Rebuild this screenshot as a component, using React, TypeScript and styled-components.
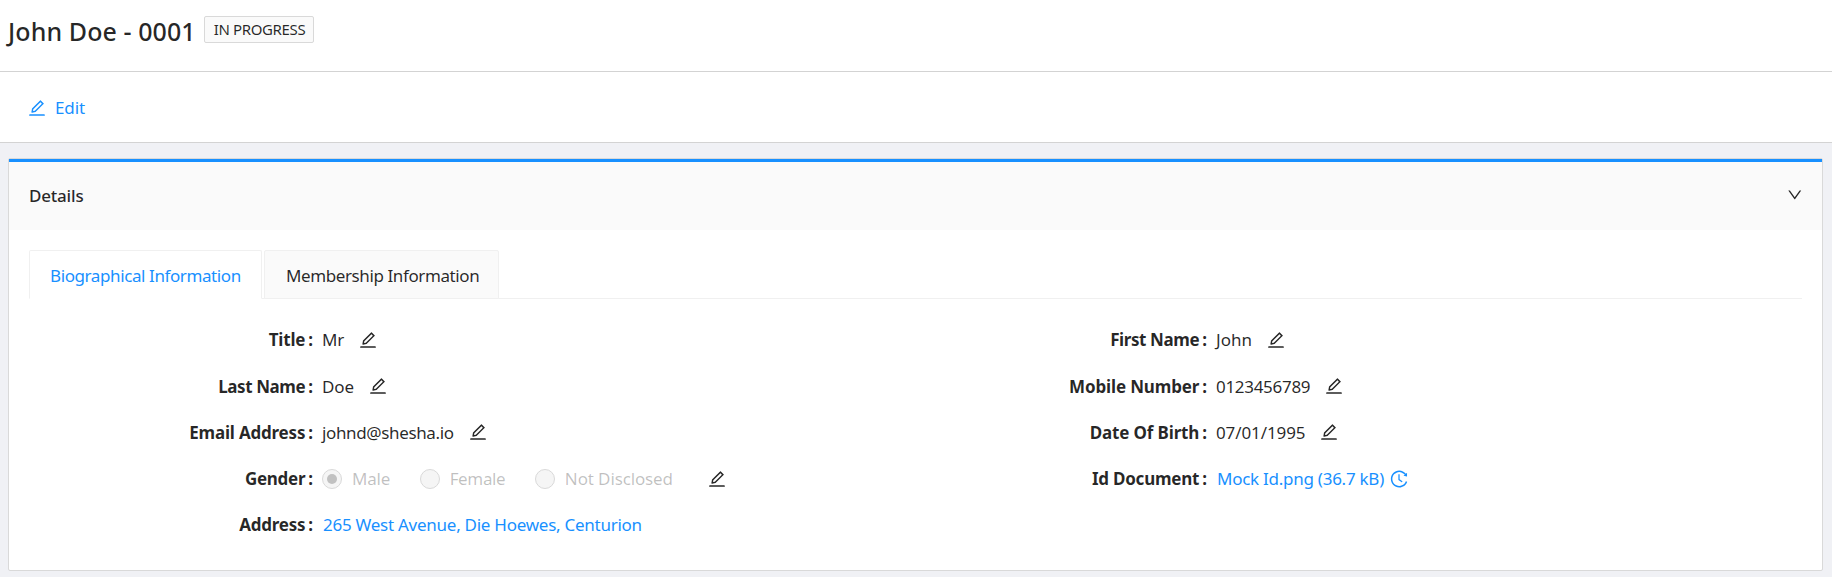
import React from 'react';
import styled, { createGlobalStyle } from 'styled-components';
import { AiOutlineEdit, AiOutlineDown, AiOutlineHistory } from 'react-icons/ai';

const GlobalStyle = createGlobalStyle`
  *, *::before, *::after { box-sizing: border-box; }
  body {
    margin: 0;
    background: #f0f1f5;
    color: rgba(0, 0, 0, 0.85);
    font-family: 'Noto Sans', 'Open Sans', sans-serif;
    font-size: 17px;
    line-height: 26px;
  }
  svg { display: block; }
`;

const Page = styled.div`
  display: flex;
  flex-direction: column;
  height: 577px;
  overflow: hidden;
  background: #f0f1f5;
`;

const TitleBar = styled.header`
  display: flex;
  align-items: flex-start;
  gap: 8px;
  height: 72px;
  padding: 16px 8px 0;
  background: #fff;
  border-bottom: 1px solid #d3d3d3;
`;

const PageTitle = styled.h1`
  margin: 0;
  font-size: 25px;
  line-height: 30px;
  font-weight: 500;
  letter-spacing: 0.08px;
`;

const StatusTag = styled.span`
  height: 27px;
  padding: 0 8px 0 9px;
  background: #fafafa;
  border: 1px solid #d9d9d9;
  border-radius: 2px;
  font-size: 15px;
  line-height: 25px;
  letter-spacing: -0.36px;
`;

const Toolbar = styled.div`
  display: flex;
  align-items: center;
  height: 71px;
  padding: 0 27px;
  background: #fff;
  border-bottom: 1px solid #d3d3d3;
`;

const EditButton = styled.button`
  display: flex;
  align-items: center;
  gap: 8px;
  padding: 1px 0 0;
  border: 0;
  background: none;
  color: #1890ff;
  font: inherit;
  letter-spacing: -0.1px;
`;

const Panel = styled.section`
  display: flex;
  flex-direction: column;
  width: 1815px;
  height: 413px;
  margin: 15px 0 0 8px;
  background: #fff;
  border: 1px solid #d9d9d9;
  border-radius: 2px;
`;

const PanelHeader = styled.div`
  display: flex;
  align-items: center;
  justify-content: space-between;
  height: 71px;
  padding: 0 19px 2px 20px;
  background: #fafafa;
  border-top: 3px solid #1890ff;
`;

const PanelTitle = styled.span`
  padding-top: 1px;
  font-weight: 500;
  letter-spacing: -0.2px;
`;

const PanelBody = styled.div`
  padding: 20px 20px 0;
`;

const TabList = styled.div`
  display: flex;
  gap: 2px;
  height: 49px;
  border-bottom: 1px solid #f0f0f0;
`;

const Tab = styled.div<{ $active?: boolean }>`
  width: ${(p) => (p.$active ? 233 : 235)}px;
  height: 49px;
  padding: 0 0 0 ${(p) => (p.$active ? 20 : 21)}px;
  line-height: 49px;
  white-space: nowrap;
  letter-spacing: -0.4px;
  color: ${(p) => (p.$active ? '#1890ff' : 'rgba(0, 0, 0, 0.85)')};
  background: ${(p) => (p.$active ? '#fff' : '#fafafa')};
  border: 1px solid #f0f0f0;
  border-bottom-color: ${(p) => (p.$active ? '#fff' : '#f0f0f0')};
  border-radius: 2px 2px 0 0;
`;

const Form = styled.div`
  display: grid;
  grid-template-columns: 894px 1fr;
  padding-top: 18px;
`;

const Column = styled.div`
  display: flex;
  flex-direction: column;
`;

const FieldRow = styled.div`
  display: grid;
  grid-template-columns: 284px 1fr;
  column-gap: 9px;
  align-items: center;
  height: 46px;
  &:first-child { margin-bottom: 1px; }
`;

const Label = styled.div<{ $tracking: number }>`
  display: flex;
  justify-content: flex-end;
  gap: 3px;
  font-weight: 700;
  letter-spacing: ${(p) => p.$tracking}px;
  white-space: nowrap;
  &::after { content: ':'; letter-spacing: 0; }
`;

const Value = styled.div<{ $gap?: number }>`
  display: flex;
  align-items: center;
  gap: ${(p) => p.$gap ?? 14}px;
  white-space: nowrap;
`;

const Text = styled.span<{ $tracking: number }>`
  letter-spacing: ${(p) => p.$tracking}px;
`;

const LinkText = styled.a<{ $tracking: number }>`
  padding-left: 1px;
  color: #1890ff;
  letter-spacing: ${(p) => p.$tracking}px;
`;

const HistoryIcon = styled(AiOutlineHistory)`
  color: #1890ff;
`;

const EditIcon = styled(AiOutlineEdit).attrs({ size: 20 })<{ $raised?: boolean }>`
  margin-bottom: ${(p) => (p.$raised ? 2 : 0)}px;
`;

const RadioGroup = styled.div`
  display: flex;
  gap: 29.5px;
  padding-right: 20px;
`;

const Radio = styled.label<{ $tracking: number }>`
  display: flex;
  align-items: center;
  gap: 10px;
  color: rgba(0, 0, 0, 0.25);
  letter-spacing: ${(p) => p.$tracking}px;
`;

const RadioDot = styled.span<{ $checked?: boolean }>`
  display: flex;
  align-items: center;
  justify-content: center;
  width: 20px;
  height: 20px;
  background: #f5f5f5;
  border: 1px solid #d9d9d9;
  border-radius: 50%;
  &::after {
    content: '';
    width: 10px;
    height: 10px;
    border-radius: 50%;
    background: ${(p) => (p.$checked ? '#c1c1c1' : 'transparent')};
  }
`;

type FieldProps = { label: string; tracking: number; children: React.ReactNode };

const Field = ({ label, tracking, children }: FieldProps) => (
  <FieldRow>
    <Label $tracking={tracking}>{label}</Label>
    <Value>{children}</Value>
  </FieldRow>
);

export default function App() {
  return (
    <Page>
      <GlobalStyle />
      <TitleBar>
        <PageTitle>John Doe - 0001</PageTitle>
        <StatusTag>IN PROGRESS</StatusTag>
      </TitleBar>
      <Toolbar>
        <EditButton>
          <EditIcon />
          Edit
        </EditButton>
      </Toolbar>
      <Panel>
        <PanelHeader>
          <PanelTitle>Details</PanelTitle>
          <AiOutlineDown size={17.5} />
        </PanelHeader>
        <PanelBody>
          <TabList>
            <Tab $active>Biographical Information</Tab>
            <Tab>Membership Information</Tab>
          </TabList>
          <Form>
            <Column>
              <Field label="Title" tracking={-0.2}>
                <Text $tracking={-0.1}>Mr</Text>
                <EditIcon />
              </Field>
              <Field label="Last Name" tracking={-0.42}>
                <Text $tracking={-0.1}>Doe</Text>
                <EditIcon $raised />
              </Field>
              <Field label="Email Address" tracking={-0.2}>
                <Text $tracking={-0.36}>johnd@shesha.io</Text>
                <EditIcon $raised />
              </Field>
              <Field label="Gender" tracking={-0.3}>
                <RadioGroup>
                  <Radio $tracking={-0.2}>
                    <RadioDot $checked />
                    Male
                  </Radio>
                  <Radio $tracking={-0.35}>
                    <RadioDot />
                    Female
                  </Radio>
                  <Radio $tracking={-0.13}>
                    <RadioDot />
                    Not Disclosed
                  </Radio>
                </RadioGroup>
                <EditIcon />
              </Field>
              <Field label="Address" tracking={-0.25}>
                <LinkText $tracking={-0.26}>265 West Avenue, Die Hoewes, Centurion</LinkText>
              </Field>
            </Column>
            <Column>
              <Field label="First Name" tracking={-0.4}>
                <Text $tracking={0}>John</Text>
                <EditIcon />
              </Field>
              <Field label="Mobile Number" tracking={-0.15}>
                <Text $tracking={-0.3}>0123456789</Text>
                <EditIcon $raised />
              </Field>
              <Field label="Date Of Birth" tracking={-0.15}>
                <Text $tracking={-0.1}>07/01/1995</Text>
                <EditIcon $raised />
              </Field>
              <Field label="Id Document" tracking={-0.23}>
                <Value $gap={5}>
                  <LinkText $tracking={-0.26}>Mock Id.png (36.7 kB)</LinkText>
                  <HistoryIcon size={20} />
                </Value>
              </Field>
            </Column>
          </Form>
        </PanelBody>
      </Panel>
    </Page>
  );
}
